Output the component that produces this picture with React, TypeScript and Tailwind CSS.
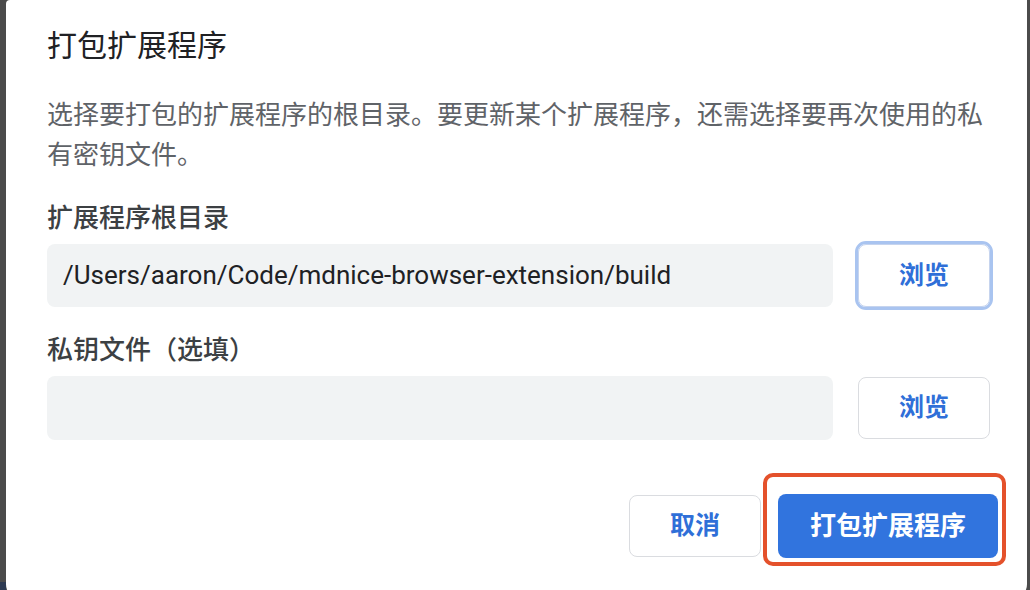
const cjk = "font-['Roboto','Noto_Sans_CJK_SC',sans-serif]";

function BrowseButton({ focused }: { focused?: boolean }) {
  return (
    <button
      className={
        "w-[132px] shrink-0 rounded-[8px] border bg-white text-[25px] font-bold text-[#2f6fd8] " +
        (focused ? "h-[63px] border-[#c6d4ee] outline-[3px] outline-solid outline-[#a9c4f0]" : "h-[62px] border-[#dadce0]")
      }
    >
      浏览
    </button>
  );
}

export default function App() {
  return (
    <div className={"flex h-[590px] w-[1030px] overflow-hidden bg-[#4b4b4b] " + cjk}>
      <div className="flex w-[6px] shrink-0 flex-col">
        <div className="h-[582px] bg-[#4b4b4b]" />
        <div className="flex-1 bg-[#2d3a52]" />
      </div>

      <div className="h-[600px] w-[1021px] shrink-0 rounded-b-[16px] rounded-tl-[4px] bg-white pl-[41px] pr-[29px]">
        <h1 className="pt-[26px] text-[30px] leading-[40px] font-normal text-[#202124]">打包扩展程序</h1>

        <p className="mt-[29px] w-[950px] text-[26px] leading-[40px] text-[#5f6368]">
          选择要打包的扩展程序的根目录。要更新某个扩展程序，还需选择要再次使用的私有密钥文件。
        </p>

        <div className="mt-[25px] text-[26px] leading-[36px] font-medium text-[#3c4043]">扩展程序根目录</div>
        <div className="mt-[8px] flex items-center gap-[25px]">
          <div className="flex h-[63px] w-[786px] items-center rounded-[8px] bg-[#f1f3f4] px-[16px] text-[26px] text-[#202124]">
            /Users/aaron/Code/mdnice-browser-extension/build
          </div>
          <BrowseButton focused />
        </div>

        <div className="mt-[25px] text-[26px] leading-[36px] font-medium text-[#3c4043]">私钥文件（选填）</div>
        <div className="mt-[8px] flex items-center gap-[25px]">
          <div className="h-[64px] w-[786px] rounded-[8px] bg-[#f1f3f4]" />
          <BrowseButton />
        </div>

        <div className="mt-[54px] flex items-center justify-end gap-[17px]">
          <button className="h-[62px] w-[132px] rounded-[8px] border border-[#dadce0] bg-white text-[25px] font-bold text-[#2f6fd8]">
            取消
          </button>
          <div className="relative">
            <button className="h-[64px] w-[220px] rounded-[8px] bg-[#3174de] text-[26px] font-bold text-white">
              打包扩展程序
            </button>
            <div className="pointer-events-none absolute -top-[21px] -right-[8px] -bottom-[8px] -left-[15px] rounded-[10px] border-[4px] border-[#e4512b]" />
          </div>
        </div>
      </div>
    </div>
  );
}
